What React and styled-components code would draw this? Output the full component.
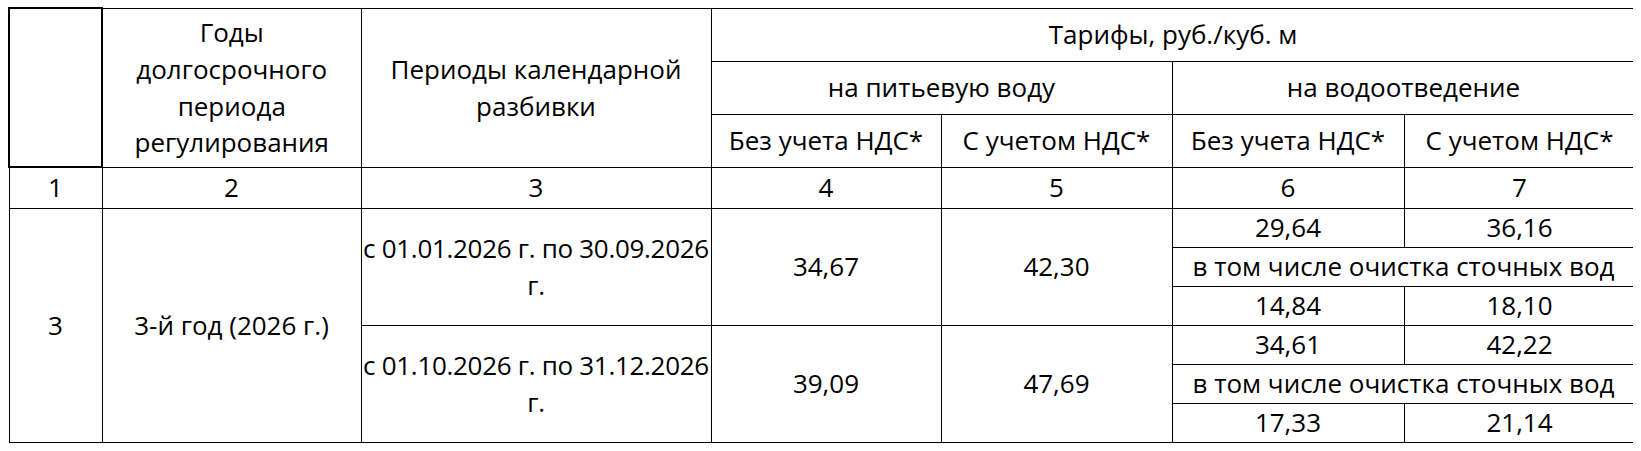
import React from "react";
import styled, { createGlobalStyle } from "styled-components";

const GlobalStyle = createGlobalStyle`
  body {
    margin: 7px 8px;
    background: #fff;
    font-family: "Open Sans", "Noto Sans", sans-serif;
    color: #000;
  }
`;

const Table = styled.table`
  width: 1626px;
  border-collapse: collapse;
  table-layout: fixed;
  font-size: 26px;
  line-height: 1.42;
`;

const Row = styled.tr`
  height: ${(p) => p.$h}px;
`;

const Cell = styled.td`
  border: ${(p) => (p.$selected ? "2px" : "1px")} solid #000;
  padding: ${(p) => (p.$tight ? "0" : "0 3px")};
  letter-spacing: ${(p) => (p.$tight ? "-0.3px" : "normal")};
  text-align: center;
  vertical-align: middle;
  font-weight: 400;
`;

const HeadCell = styled(Cell).attrs({ as: "th" })``;

const cols = [93, 259, 350, 230, 231, 232, 231];

const periods = [
  {
    range: "с 01.01.2026 г. по 30.09.2026 г.",
    water: ["34,67", "42,30"],
    drain: ["29,64", "36,16"],
    clean: ["14,84", "18,10"],
  },
  {
    range: "с 01.10.2026 г. по 31.12.2026 г.",
    water: ["39,09", "47,69"],
    drain: ["34,61", "42,22"],
    clean: ["17,33", "21,14"],
  },
];

const App = () => {
  return (
    <>
      <GlobalStyle />
      <Table>
        <colgroup>
          {cols.map((w, i) => (
            <col key={i} style={{ width: w }} />
          ))}
        </colgroup>
        <thead>
          <Row $h={53}>
            <HeadCell rowSpan={3} $selected></HeadCell>
            <HeadCell rowSpan={3}>Годы долгосрочного периода регулирования</HeadCell>
            <HeadCell rowSpan={3}>Периоды календарной разбивки</HeadCell>
            <HeadCell colSpan={4}>Тарифы, руб./куб. м</HeadCell>
          </Row>
          <Row $h={53}>
            <HeadCell colSpan={2}>на питьевую воду</HeadCell>
            <HeadCell colSpan={2}>на водоотведение</HeadCell>
          </Row>
          <Row $h={53}>
            <HeadCell>Без учета НДС*</HeadCell>
            <HeadCell>С учетом НДС*</HeadCell>
            <HeadCell>Без учета НДС*</HeadCell>
            <HeadCell>С учетом НДС*</HeadCell>
          </Row>
        </thead>
        <tbody>
          <Row $h={41}>
            {[1, 2, 3, 4, 5, 6, 7].map((n) => (
              <Cell key={n}>{n}</Cell>
            ))}
          </Row>
          {periods.map((p, i) => (
            <React.Fragment key={i}>
              <Row $h={39}>
                {i === 0 && <Cell rowSpan={6}>3</Cell>}
                {i === 0 && <Cell rowSpan={6}>3-й год (2026 г.)</Cell>}
                <Cell rowSpan={3} $tight>
                  {p.range}
                </Cell>
                <Cell rowSpan={3}>{p.water[0]}</Cell>
                <Cell rowSpan={3}>{p.water[1]}</Cell>
                <Cell>{p.drain[0]}</Cell>
                <Cell>{p.drain[1]}</Cell>
              </Row>
              <Row $h={39}>
                <Cell colSpan={2}>в том числе очистка сточных вод</Cell>
              </Row>
              <Row $h={39}>
                <Cell>{p.clean[0]}</Cell>
                <Cell>{p.clean[1]}</Cell>
              </Row>
            </React.Fragment>
          ))}
        </tbody>
      </Table>
    </>
  );
};

export default App;
